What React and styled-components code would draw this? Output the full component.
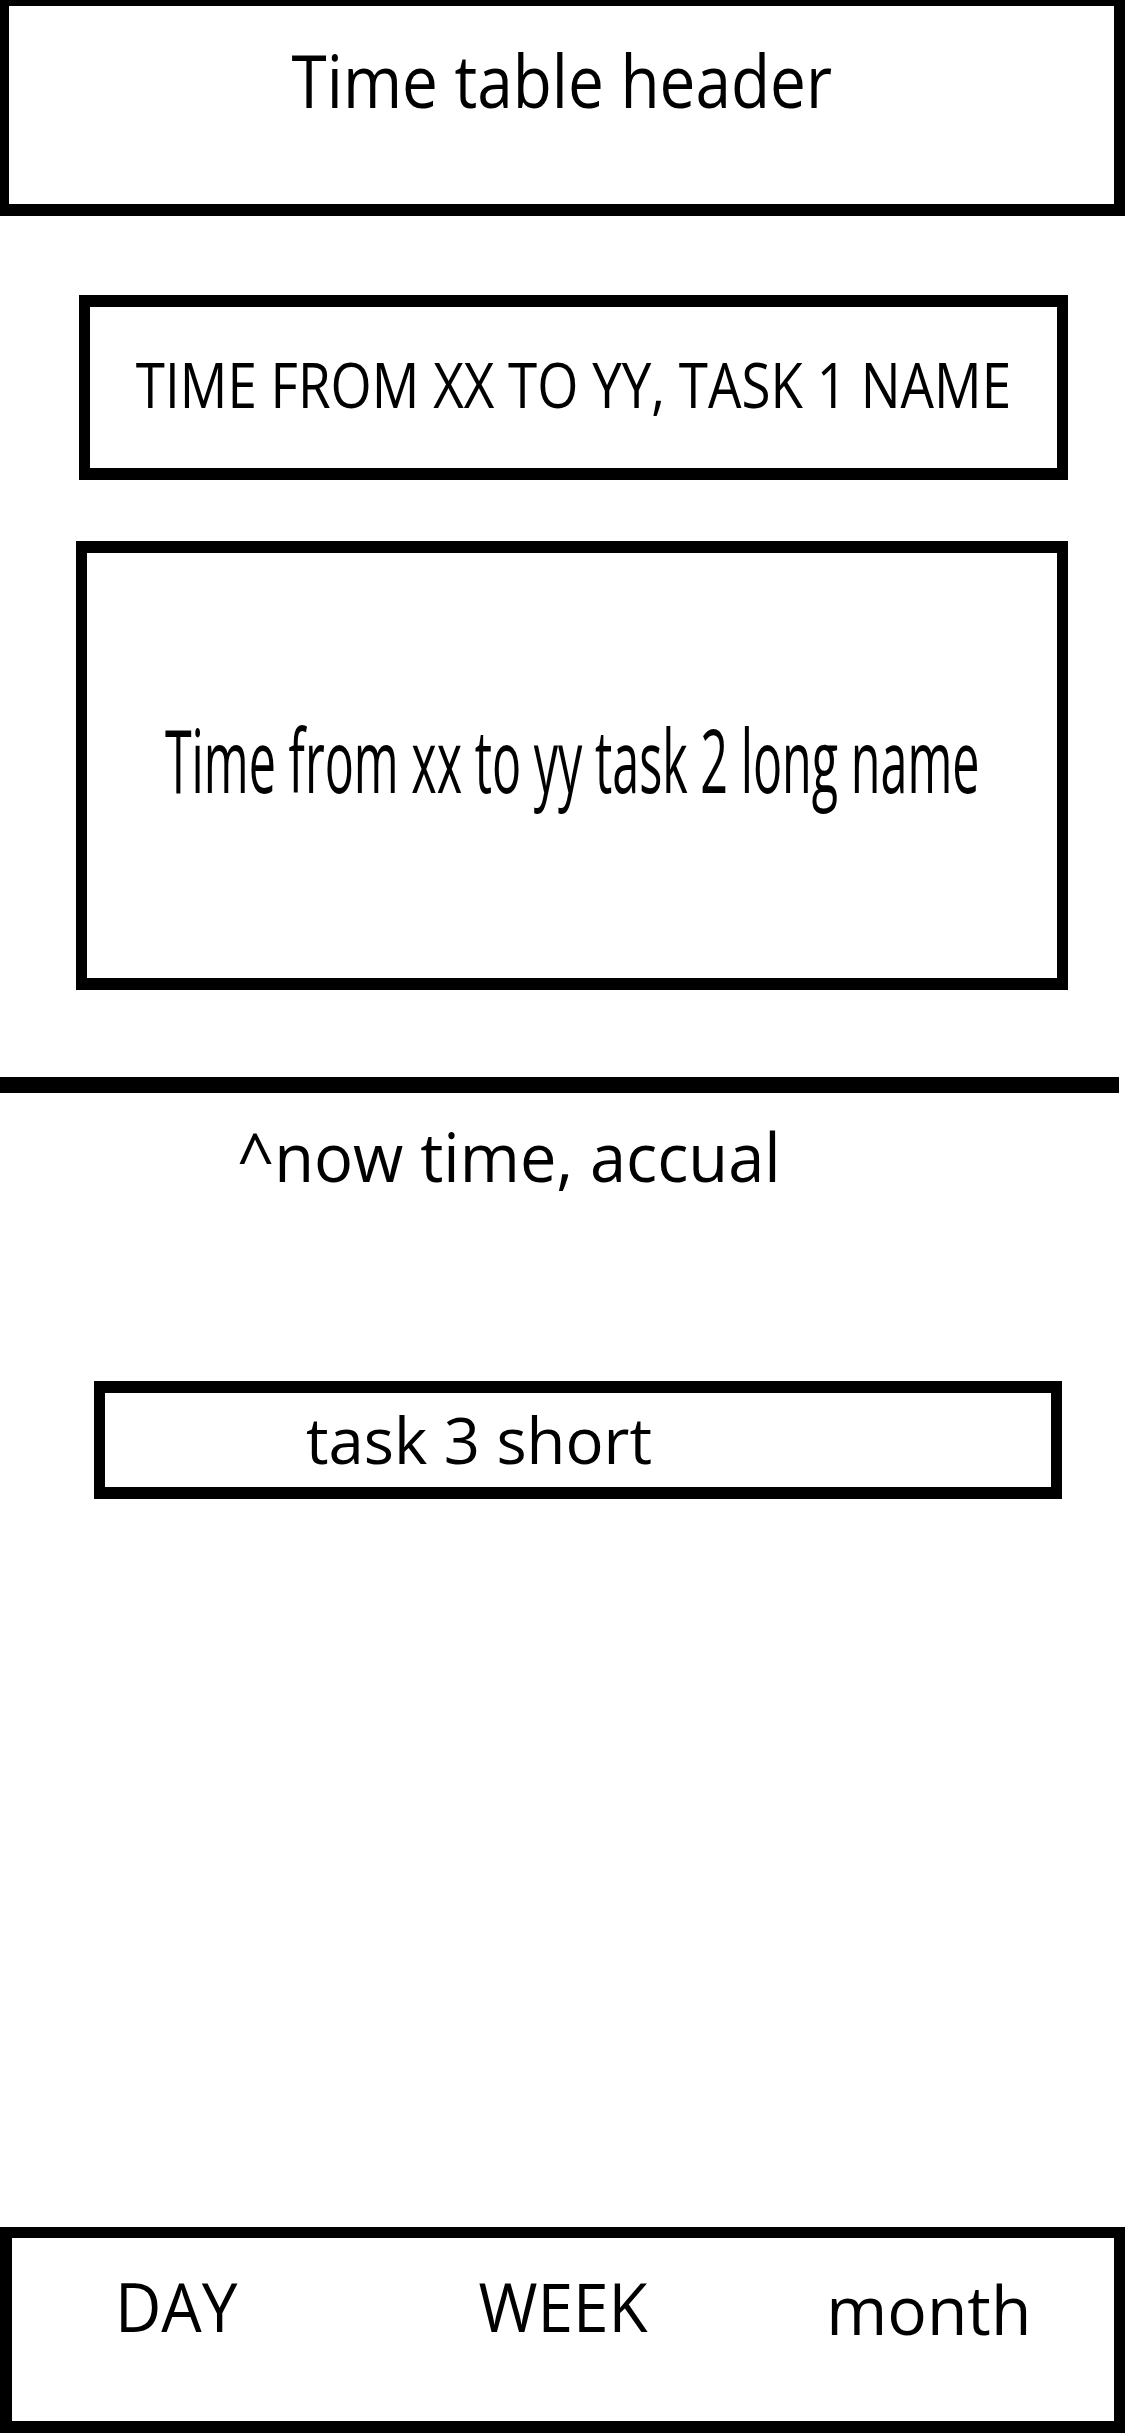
import React from 'react';
import styled, { createGlobalStyle } from 'styled-components';

const GlobalStyle = createGlobalStyle`
  html, body {
    margin: 0;
    padding: 0;
    background: #ffffff;
    overflow-x: hidden;
  }
  body {
    font-family: "Open Sans", "Liberation Sans", sans-serif;
    color: #000;
  }
`;

const Page = styled.div`
  height: 2436px;
  box-sizing: border-box;
  padding-bottom: 3px;
  display: flex;
  flex-direction: column;
  background: #fff;
`;

const Header = styled.header`
  height: 216px;
  box-sizing: border-box;
  border-style: solid;
  border-color: #000;
  border-width: 6px 11px 12px 9px;
  padding-top: 37px;
  display: flex;
  justify-content: center;
  align-items: flex-start;
`;

// squeezed text, the sketch uses a narrow font
const Label = styled.span`
  display: inline-block;
  white-space: nowrap;
  font-size: ${(p) => p.$size}px;
  line-height: ${(p) => p.$size}px;
  font-weight: 400;
  transform: scaleX(${(p) => p.$squeeze || 1});
  transform-origin: ${(p) => (p.$align === 'left' ? 'left center' : 'center center')};
`;

const TaskCard = styled.div`
  margin-top: ${(p) => p.$top}px;
  margin-left: ${(p) => p.$left}px;
  width: ${(p) => p.$width}px;
  height: ${(p) => p.$height}px;
  box-sizing: border-box;
  border: solid #000;
  border-width: 12px 11px;
  display: flex;
  align-items: center;
  justify-content: ${(p) => (p.$align === 'left' ? 'flex-start' : 'center')};
  padding-left: ${(p) => p.$padLeft || 0}px;
  padding-bottom: ${(p) => p.$lift || 0}px;
  overflow: hidden;
`;

const NowLine = styled.div`
  margin-top: 87px;
  width: 1119px;
  height: 16px;
  background: #000;
`;

const NowLabel = styled.div`
  margin-top: 29px;
  padding-left: 237px;
  height: 68px;
`;

const BottomNav = styled.nav`
  margin-top: auto;
  height: 206px;
  box-sizing: border-box;
  border-style: solid;
  border-color: #000;
  border-width: 11px 11px 12px 12px;
  padding-top: 34px;
  display: grid;
  grid-template-columns: repeat(3, 1fr);
  align-items: start;
`;

const NavItem = styled.div`
  display: flex;
  justify-content: center;
  margin-left: ${(p) => p.$nudge || 0}px;
  padding-top: ${(p) => p.$drop || 0}px;
`;

const tasks = [
  { id: 1, text: 'TIME FROM XX TO YY, TASK 1 NAME', top: 79, left: 79, width: 989, height: 185, size: 62, squeeze: 0.854, lift: 8 },
  { id: 2, text: 'Time from xx to yy task 2 long name', top: 61, left: 76, width: 992, height: 449, size: 88, squeeze: 0.551, lift: 14 },
];

export default function App() {
  return (
    <>
      <GlobalStyle />
      <Page>
        <Header>
          <Label $size={73} $squeeze={0.875}>Time table header</Label>
        </Header>

        {tasks.map((t) => (
          <TaskCard key={t.id} $top={t.top} $left={t.left} $width={t.width} $height={t.height} $lift={t.lift}>
            <Label $size={t.size} $squeeze={t.squeeze}>{t.text}</Label>
          </TaskCard>
        ))}

        <NowLine />
        <NowLabel>
          <Label $size={68} $squeeze={0.955} $align="left">^now time, accual</Label>
        </NowLabel>

        <TaskCard $top={191} $left={94} $width={968} $height={118} $align="left" $padLeft={201}>
          <Label $size={64} $squeeze={0.99} $align="left">task 3 short</Label>
        </TaskCard>

        <BottomNav>
          <NavItem $nudge={-38}>
            <Label $size={68} $squeeze={0.94}>DAY</Label>
          </NavItem>
          <NavItem>
            <Label $size={68} $squeeze={0.94}>WEEK</Label>
          </NavItem>
          <NavItem $nudge={-4} $drop={3}>
            <Label $size={68} $squeeze={0.97}>month</Label>
          </NavItem>
        </BottomNav>
      </Page>
    </>
  );
}
